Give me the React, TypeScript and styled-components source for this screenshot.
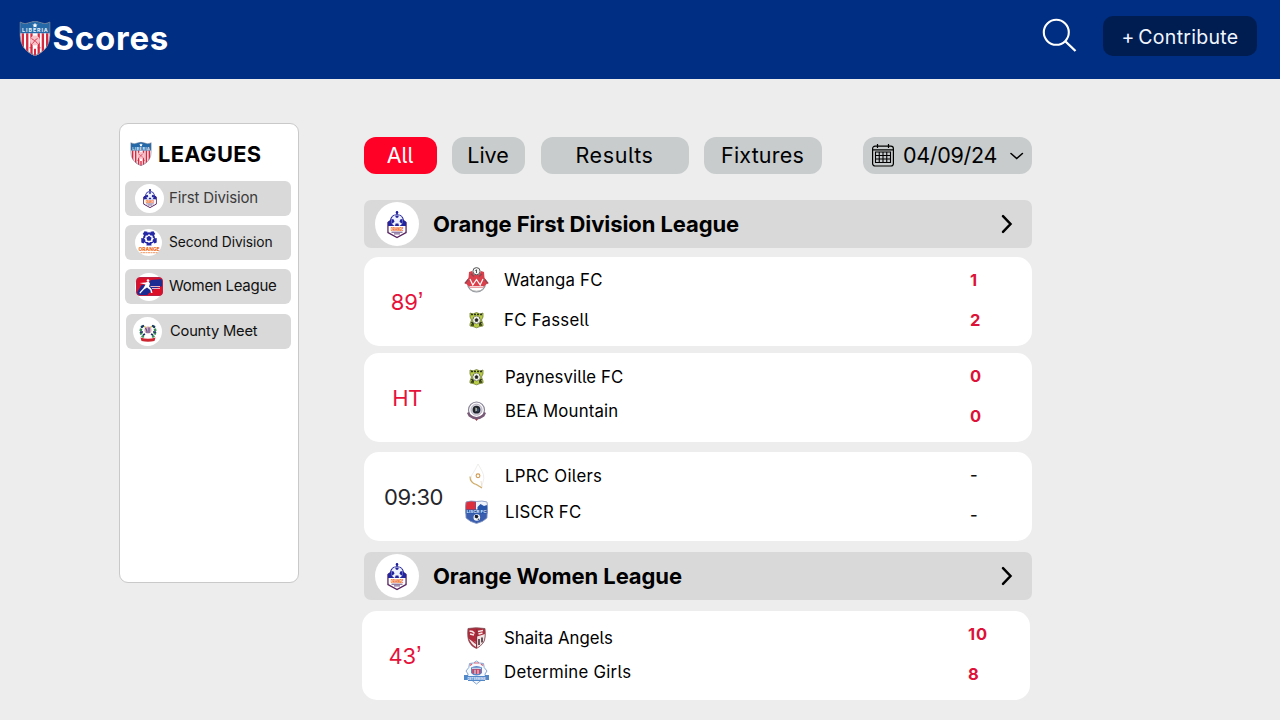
import React from "react";
import styled, { createGlobalStyle } from "styled-components";

const GlobalStyle = createGlobalStyle`
  * { box-sizing: border-box; }
  body {
    margin: 0;
    background: #ededed;
    font-family: Inter, "Liberation Sans", sans-serif;
    font-feature-settings: "cv05" 1;
    color: #000;
    overflow: hidden;
  }
  svg {
    flex: none;
    overflow: visible;
    letter-spacing: 0;
    font-feature-settings: normal;
  }
`;

const Page = styled.div`
  width: 1280px;
  height: 720px;
  overflow: hidden;
  background: #ededed;
`;

const Header = styled.header`
  height: 79px;
  background: #002e82;
  display: flex;
  align-items: flex-start;
  padding: 0 23px 0 19px;
`;

const Brand = styled.div`
  display: flex;
  align-items: center;
  gap: 1px;
  height: 77px;
  flex: 1;
`;

const BrandName = styled.h1`
  margin: 0;
  padding-left: 0.5px;
  font-size: 33px;
  font-weight: 650;
  line-height: 39px;
  padding-bottom: 1px;
  letter-spacing: 0.75px;
  color: #fff;
  font-feature-settings: normal;
`;

const SearchButton = styled.button`
  border: 0;
  padding: 0;
  background: none;
  width: 36px;
  height: 36px;
  margin: 17px 25px 0 0;
`;

const ContributeButton = styled.button`
  border: 0;
  width: 154px;
  height: 40px;
  margin-top: 16px;
  padding: 1px 0 0;
  border-radius: 10px;
  background: #001d52;
  color: #f2f6ff;
  font: 400 19.5px/40px Inter, sans-serif;
  letter-spacing: 0.3px;
  word-spacing: -2.2px;
  white-space: nowrap;
`;

const Body = styled.div`
  display: flex;
  align-items: flex-start;
  padding-left: 119px;
`;

const Sidebar = styled.aside`
  width: 180px;
  height: 460px;
  margin-top: 44px;
  border: 1px solid #c9c9c9;
  border-radius: 9px;
  background: #fff;
  padding: 16px 7px 0 5px;
`;

const SidebarTitle = styled.h2`
  display: flex;
  align-items: center;
  gap: 6px;
  margin: 0 0 13px;
  padding-left: 5px;
  height: 28px;
  font-size: 21.8px;
  font-weight: 680;
  letter-spacing: 0.4px;
`;

const LeagueItem = styled.a<{ $gap: number; $inset: number; $ink: string; $size: number; $track: number }>`
  display: flex;
  align-items: center;
  height: 35px;
  margin: 0 0 ${(p) => p.$gap}px ${(p) => p.$inset}px;
  padding-left: ${(p) => (p.$inset ? 7 : 10)}px;
  border-radius: 6px;
  background: #d9d9d9;
  color: ${(p) => p.$ink};
  font-size: ${(p) => p.$size}px;
  letter-spacing: ${(p) => p.$track}px;
  white-space: nowrap;
`;

const LeagueLabel = styled.span`
  padding-bottom: 2px;
`;

const Disc = styled.span<{ $size: number; $after: number }>`
  display: flex;
  flex: none;
  align-items: center;
  justify-content: center;
  width: ${(p) => p.$size}px;
  height: ${(p) => p.$size}px;
  margin-right: ${(p) => p.$after}px;
  border-radius: 50%;
  background: #fff;
`;

const Main = styled.main`
  width: 668px;
  margin: 58px 0 0 65px;
`;

const Tabs = styled.nav`
  display: flex;
  height: 37px;
  margin-bottom: 26px;
`;

const Tab = styled.button<{ $width: number; $after: number; $track: number; $active?: boolean }>`
  border: 0;
  padding: 0 1px 0 0;
  width: ${(p) => p.$width}px;
  margin-right: ${(p) => p.$after}px;
  border-radius: 12px;
  background: ${(p) => (p.$active ? "#ff0026" : "#c8cccd")};
  color: ${(p) => (p.$active ? "#fff" : "#000")};
  font: 400 21.5px/37px Inter, sans-serif;
  font-feature-settings: "cv05" 1;
  letter-spacing: ${(p) => p.$track}px;
`;

const DatePicker = styled.button`
  display: flex;
  align-items: center;
  border: 0;
  width: 169px;
  padding: 0 8px;
  border-radius: 12px;
  background: #c8cccd;
  color: #000;
  font: 400 21.5px/37px Inter, sans-serif;
  letter-spacing: -0.3px;
`;

const DateValue = styled.span`
  flex: none;
  width: 114px;
  padding-left: 8px;
  text-align: left;
`;

const LeagueHeader = styled.section<{ $after: number }>`
  display: flex;
  align-items: center;
  height: 48px;
  margin-bottom: ${(p) => p.$after}px;
  padding: 0 18.5px 0 11px;
  border-radius: 7px;
  background: #d9d9d9;
`;

const LeagueName = styled.h3<{ $track: number }>`
  flex: 1;
  margin: 0;
  font-size: 22px;
  font-weight: 680;
  letter-spacing: ${(p) => p.$track}px;
`;

const MatchCard = styled.article<{ $after: number; $shift?: boolean }>`
  display: flex;
  height: 89px;
  margin: 0 0 ${(p) => p.$after}px ${(p) => (p.$shift ? -2 : 0)}px;
  width: 668px;
  border-radius: 15px;
  background: #fff;
`;

const Clock = styled.div<{ $live: boolean; $track: number; $width: number }>`
  width: ${(p) => p.$width}px;
  padding-right: ${(p) => (p.$live ? p.$width - 86 : 1)}px;
  line-height: 90px;
  text-align: center;
  font-size: 22px;
  letter-spacing: ${(p) => p.$track}px;
  color: ${(p) => (p.$live ? "#e6123a" : "#26262a")};
`;

const MinuteMark = styled.span`
  font-family: "Liberation Sans", sans-serif;
  font-size: 25px;
  line-height: 1;
`;

const Teams = styled.div<{ $top: number; $gap: number; $width: number }>`
  display: flex;
  flex-direction: column;
  width: ${(p) => p.$width}px;
  gap: ${(p) => p.$gap}px;
  padding-top: ${(p) => p.$top}px;
`;

const Team = styled.div<{ $track: number; $inset: number }>`
  display: flex;
  align-items: center;
  height: 26px;
  font-size: 16.8px;
  letter-spacing: ${(p) => p.$track}px;
  white-space: nowrap;
  & > svg { margin-right: ${(p) => p.$inset}px; }
`;

const Goals = styled.div<{ $top: number; $live: boolean }>`
  display: flex;
  flex-direction: column;
  gap: 20px;
  padding-top: ${(p) => p.$top}px;
  font-size: 16.5px;
  line-height: 20px;
  font-weight: ${(p) => (p.$live ? 700 : 500)};
  letter-spacing: 0.8px;
  color: ${(p) => (p.$live ? "#dc1238" : "#111")};
`;

function Shield({ w, h }: { w: number; h: number }) {
  return (
    <svg width={w} height={h} viewBox="0 0 31 34">
      <clipPath id={"shield" + w}>
        <path d="M1 1Q6 4 10 1.500L15.500 0L21 1.500Q25 4 30 1V14Q30 28 15.500 34Q1 28 1 14Z" />
      </clipPath>
      <g clipPath={"url(#shield" + w + ")"}>
        <path fill="#fff" d="M0 0h31v34H0z" />
        <path fill="#d82840" d="M2.500 12h2.300v22H2.500zM6.800 12h2.300v22H6.800zM11 12h2.200v22H11zM18 12h2.200v22H18zM22 12h2.300v22H22zM26.200 12h2.300v22h-2.300zM14.500 27h2v7h-2z" />
        <path fill="#2569a8" d="M0 0h31v12H0z" />
        <circle cx="15.500" cy="19" r="4.800" fill="#f6c3cb" />
        <path d="M12 17l3 2 3-2M13 22l2.500-3 2.500 3M10 26h3m5 0h3" stroke="#d82840" fill="none" strokeWidth=".8" />
      </g>
      <text x="3" y="10.900" fontSize="5.200" fontWeight="700" textLength="25" fill="#e7f2fa">LIBERIA</text>
      <path fill="#fff" d="M15.500 1.800l.8 1.500 1.700.2-1.200 1.200.2 1.700-1.500-.8-1.500.8.2-1.700L13 3.500l1.700-.2z" />
      <path fill="none" stroke="#6d7890" strokeWidth=".7" d="M1 1Q6 4 10 1.500L15.500 .4L21 1.500Q25 4 30 1V14Q30 28 15.500 33.500Q1 28 1 14Z" />
    </svg>
  );
}

function OrangeCrest({ w, h }: { w: number; h: number }) {
  return (
    <svg width={w} height={h} viewBox="0 0 20 27">
      <path d="M10 0v5" stroke="#25259a" strokeWidth="1.500" />
      <circle cx="10" cy="1.500" r="1.300" fill="#20209a" />
      <path d="M3 10L1 11.500v10l9 5 9-5v-10L17 10" fill="#fff" stroke="#57225f" strokeWidth="1.400" />
      <path d="M10 3.300c4.500 0 6.500 3 7 6L19 11v4H1v-4l2-1.700c.5-3 2.500-6 7-6z" fill="#24249c" />
      <circle cx="10" cy="9.700" r="5.900" fill="#eef1ff" />
      <path d="M8 4.500h4L11 6.800H9zM4.500 8l2.300.5.700 2.200-2 1.800-1.200-1zM15.500 8l-2.300.5-.7 2.200 2 1.800 1.200-1zM8.600 12.500h2.800l.6 2.500H8z" fill="#24249c" />
      <path fill="#fff" d="M1.800 15h16.400v5.500H1.800z" />
      <text x="3.800" y="19.700" fontSize="4.600" fontWeight="900" textLength="12.400" lengthAdjust="spacingAndGlyphs" fill="#f16a24">ORANGE</text>
      <path d="M4.500 21.200h11M7 22.900h6" stroke="#53306e" strokeWidth=".9" />
    </svg>
  );
}

function SecondCrest() {
  return (
    <svg width="22" height="23" viewBox="0 0 22 23">
      <circle cx="11" cy="7.200" r="6" fill="#2428a4" />
      <path fill="#fff" d="M11 3l1.500 1.500h2l.2 2 1.500 1.200-1.500 1.300-.2 2-2.200-.1L11 12.300l-1.300-1.400-2.200.1-.2-2-1.500-1.300 1.500-1.200.2-2h2z" />
      <path fill="#2428a4" d="M11 4.800l2.600 2-1 3H9.400l-1-3zM6.500.3l3 .5v2.700L6.800 4.800 4.700 3zM15.500.3l-3 .5v2.700l2.700 1.300L17.300 3zM3.300 7l2.900.6 1 2.600-1.700 2.300-2.200-1zM18.700 7l-2.900.6-1 2.600 1.700 2.300 2.200-1zM9 11.800h4l.6 2.800H8.400z" />
      <text x=".5" y="20.200" fontSize="5.200" fontWeight="800" textLength="21" lengthAdjust="spacingAndGlyphs" fill="#f06c20">ORANGE</text>
      <path d="M2.500 21.700h17" stroke="#f08a50" strokeWidth=".9" strokeDasharray="2 .5" />
    </svg>
  );
}

function WomenCrest() {
  return (
    <svg width="27" height="19" viewBox="0 0 27 19">
      <rect x=".5" y=".5" width="26" height="18" rx="3.500" fill="#db1028" />
      <path fill="#1c2b91" d="M1 15.500L5.500 8l6-.5L15 3l11-1v11l-8 1-5 2-2 2.500H4a3 3 0 0 1-3-3z" />
      <path fill="#db1028" d="M18 12l8.500-3v6.500a3 3 0 0 1-3 3H12l3-4z" />
      <circle cx="12" cy="3.500" r="1.300" fill="#fff" />
      <path fill="#fff" d="M3.500 6l6-.5 3-1 1.500 2-1 3 2.500 2.500 1 4h-1.500l-.7-3-3.300-2.500-3 2L4 16.800l-.5-1.200L7.500 11l2-3.500z" />
      <path d="M14.500 9.500H24M16 11.500h8" stroke="#efb2c2" strokeWidth="1.100" />
      <rect x=".5" y=".5" width="26" height="18" rx="3.500" fill="none" stroke="#b92144" />
    </svg>
  );
}

function CountyCrest() {
  return (
    <svg width="20" height="20" viewBox="0 0 20 20">
      <path d="M5 3.500Q2 7 3 11t4 4M15 3.500Q18 7 17 11t-4 4" stroke="#3c8d58" strokeWidth="2.500" fill="none" strokeDasharray="2.500 1" />
      <path d="M3 5.500l3-2M2 10h3M5 13l2-1M17 5.500l-3-2M18 10h-3M15 13l-2-1" stroke="#1c2f6a" strokeWidth="1.700" />
      <path d="M6 4.500l2 1M14 4.500l-2 1" stroke="#c7b62d" strokeWidth="1.200" />
      <circle cx="10" cy="8" r="3.600" fill="#d7aab8" />
      <path d="M7.500 6l1.500 3M11 5.500v3.500M8 10h4" stroke="#514386" strokeWidth="1.100" />
      <path fill="#ce2631" d="M2.500 15.500Q10 18 17.500 15.500l-1 3.500Q10 20.500 3.500 19z" />
    </svg>
  );
}

function WatangaCrest() {
  return (
    <svg width="25" height="26" viewBox="0 0 25 26">
      <circle cx="12.500" cy="16" r="9" fill="#fff" stroke="#9298a0" strokeWidth="1.200" />
      <path fill="#d9404c" d="M5 5l3-1 2 4h5l2-4 3 1 .5 6L24 16l-2.500 2L19 20.500H6L3.500 18 1 16l3.500-5z" />
      <path d="M6 12l2.800 6 3.700-5.500 3.700 5.500 2.800-6" stroke="#fff" strokeWidth="1.200" fill="none" />
      <path d="M5.500 19.500h14" stroke="#f4d4d7" strokeWidth="1" />
      <path d="M.8 16.500l3.400-4M24.200 16.500l-3.400-4M7 7l3 2.500m8-2.500l-3 2.500" stroke="#8a4650" strokeWidth="1.300" />
      <circle cx="12.500" cy="4.200" r="3.600" fill="#f2f3f4" stroke="#555" />
      <path d="M12.500 2.500v3.500M11.300 3.500h1.500" stroke="#555" strokeWidth="1" />
      <path d="M6 22.500q6.500 3.500 13 0" stroke="#aaa" fill="none" />
    </svg>
  );
}

function FassellCrest() {
  return (
    <svg width="25" height="16" viewBox="0 0 25 16">
      <path fill="#b9cd47" stroke="#617023" strokeWidth=".7" d="M6 1l3 1 3.500-1.500L16 2l3-1v4l-1.500 3L19 12v2l-3 .5-3.500 1.300L9 14.500 6 14v-2l1.500-4L6 5z" />
      <path d="M7 2.500h2m1 0h2m1 0h2m1 0h2M7 13h3m5 0h3" stroke="#293319" strokeWidth="1.500" />
      <circle cx="12.500" cy="8" r="3.900" fill="#f7f9ee" stroke="#50583a" strokeWidth=".6" />
      <path d="M12.500 6.300l1.600 1.200-.6 1.900h-2l-.6-1.900zM9 6.500l1-.8M16 6.500l-1-.8M10.300 11.300l.6-.8m3.800.8l-.6-.8" fill="#222" stroke="#222" strokeWidth=".6" />
      <path d="M7.500 10l2 2.500m8-2.500l-2 2.500" stroke="#29311a" strokeWidth="1.600" />
    </svg>
  );
}

function BeaCrest() {
  return (
    <svg width="25" height="20" viewBox="0 0 25 20">
      <circle cx="12.500" cy="9" r="8" fill="#fff" stroke="#8c8598" strokeWidth="1.200" />
      <circle cx="12.500" cy="8.700" r="5.600" fill="#d9d6e1" stroke="#a9a2b4" strokeWidth=".8" />
      <circle cx="12.500" cy="8.700" r="3.900" fill="#20242c" />
      <path d="M11.500 6.500l1.200.5v3l-1.200.5z" fill="#e4e4bd" />
      <path d="M14 7.500v3" stroke="#4e70bd" />
      <path d="M4 11.500l1.500 3Q12.500 20 19.500 14.500l1.500-3" fill="none" stroke="#785a76" strokeWidth="2.300" />
      <path d="M11 18h3l-1.500 2z" fill="#9b3548" />
    </svg>
  );
}

function OilersCrest() {
  return (
    <svg width="25" height="26" viewBox="0 0 25 26">
      <path d="M14 1L11 7Q6 13 7 17q2 5 10 7Q22 15 18 8z" fill="#fff" stroke="#e8e7e5" strokeWidth=".7" />
      <path d="M6 13.500Q6 20 12.500 21.500L18 25" stroke="#d0ad68" strokeWidth="1.200" fill="none" />
      <circle cx="14" cy="12.800" r="1.900" fill="#fff" stroke="#d19852" strokeWidth="1.100" />
      <path d="M17 18l1 6" stroke="#e9dcc4" strokeWidth=".8" />
    </svg>
  );
}

function LiscrCrest() {
  return (
    <svg width="25" height="24" viewBox="0 0 25 24">
      <path fill="#3b5fae" d="M2 2l5-1 5.500.5L18 1l5 1 .5 5-.5 11q-4 4-10.500 5.500Q6 22 2 18L1.500 7z" />
      <path fill="#dd2e3d" d="M2 2l5-1 4.500.5V10h-10V7z" />
      <path fill="#eef3fb" d="M12 1.500L18 1l5 1 .5 8H12z" />
      <path fill="#2554a8" d="M13.500 7l3-3 3.500 2 3-1 .5 4.500h-10zM1.500 9.500h22v4h-22z" />
      <text x="2.500" y="13" fontSize="3.800" fontWeight="700" textLength="20" lengthAdjust="spacingAndGlyphs" fill="#dfe8f8">LISCR FC</text>
      <circle cx="12.800" cy="17.500" r="3.300" fill="#f4f6fa" />
      <path d="M11 15h2.500l1 1.800-1.500 1.700-2.300-1zM13.500 19l1.800-.5-1 1.800z" fill="#182030" />
      <path d="M2 2l5-1 5.500.5L18 1l5 1 .5 5-.5 11q-4 4-10.500 5.500Q6 22 2 18L1.500 7z" fill="none" stroke="#8c9bc3" strokeWidth=".8" />
    </svg>
  );
}

function ShaitaCrest() {
  return (
    <svg width="25" height="22" viewBox="0 0 25 22">
      <path d="M4 1.500Q12 0 21 1.500q1 10-1.500 14Q16 20 12.500 21.500 8 20 5.500 15.500 3 11 4 1.500z" fill="#ad2a3a" />
      <path d="M13 9.500L21 7q0 6-2 9-2 3.500-6 5zM5 12l7 3v5q-5-3-7-8z" fill="#f0e6e6" />
      <path d="M5.500 4l3 .5 2 2M6 7l4 1M14 4.500l5-1M14.500 7l4-1" stroke="#f3e6e7" strokeWidth="1.600" fill="none" />
      <path d="M6 11.500l6 5" stroke="#ad2a3a" strokeWidth="1.500" />
      <path d="M15 12v6M18 10.500v5" stroke="#3c2228" strokeWidth="1.500" />
      <path d="M12.700 2v18" stroke="#74303c" strokeWidth=".8" />
      <path d="M4 1.500Q12 0 21 1.500q1 10-1.500 14Q16 20 12.500 21.500 8 20 5.500 15.500 3 11 4 1.500z" fill="none" stroke="#7f5058" strokeWidth=".8" />
    </svg>
  );
}

function DetermineCrest() {
  return (
    <svg width="25" height="25" viewBox="0 0 25 25">
      <path d="M12.500 1l3 2 4 .5.700 4L23 11l-2 3 .5 4-4 2-5 4-5-4-4-2 .5-4-2-3 2.800-3.500.7-4 4-.5z" fill="#f6f9fe" stroke="#86a6d3" />
      <path d="M6 5.500l2-1.500M10 3h5M17 4l2 1.500" stroke="#d96372" strokeWidth="1.200" />
      <path d="M7 7.500Q12.500 4.500 18 7.500v5.500q-2 2.500-5.500 2.500T7 13z" fill="#5a87c7" />
      <path d="M9.500 9v4.500m3-5v5.500m3-5V13.500" stroke="#e13c55" strokeWidth="2" />
      <path d="M8 8.300h9M11 10v4M14 10v4" stroke="#fff" strokeWidth=".8" />
      <path fill="#5388c8" d="M0 15h4v1h17v-1h4v5h-4v1H4v-1H0z" />
      <text x="3.500" y="19.700" fontSize="3.400" fontWeight="700" textLength="18" lengthAdjust="spacingAndGlyphs" fill="#e9f3ff">DETERMINE</text>
    </svg>
  );
}

function CalendarIcon() {
  return (
    <svg width="24" height="23" viewBox="0 0 24 23" fill="none" stroke="#000">
      <rect x="1.600" y="2.200" width="20.800" height="19.800" rx="2.500" strokeWidth="1.200" />
      <path d="M6.500 0v4M17.500 0v4M1.600 5.800h20.800" strokeWidth="1.200" />
      <path d="M4.500 8h15v10.500h-15zM8.250 8v10.500M12 8v10.500M15.750 8v10.500M4.500 11.500h15M4.500 15h15" strokeWidth="1.100" />
    </svg>
  );
}

function ArrowIcon() {
  return (
    <svg width="14" height="20" viewBox="0 0 14 20" fill="none" stroke="#000" strokeWidth="2.500" strokeLinecap="round">
      <path d="M3 2.200L10.500 10 3 17.800" />
    </svg>
  );
}

const leagues = [
  { name: "First Division", ink: "#3c3c3c", size: 15, track: -0.15, gap: 9, inset: 0, disc: 29, after: 5, crest: <OrangeCrest w={14} h={19} /> },
  { name: "Second Division", ink: "#111", size: 13.8, track: -0.1, gap: 9, inset: 0, disc: 27, after: 7, crest: <SecondCrest /> },
  { name: "Women League", ink: "#111", size: 15, track: -0.25, gap: 10, inset: 0, disc: 28, after: 6, crest: <WomenCrest /> },
  { name: "County Meet", ink: "#111", size: 14.7, track: -0.2, gap: 0, inset: 1, disc: 29, after: 8, crest: <CountyCrest /> },
];

interface Side { name: string; crest: React.ReactNode; goals: string; track: number; inset: number }
interface Match { clock: string; minutes?: boolean; live: boolean; clockTrack: number; sides: Side[]; top: number; gap: number; goalsTop: number; after: number; shift?: boolean }

const firstDivision: Match[] = [
  { clock: "89", minutes: true, live: true, clockTrack: -0.1, top: 10, gap: 14, goalsTop: 13, after: 7, sides: [
    { name: "Watanga FC", crest: <WatangaCrest />, goals: "1", track: 0.2, inset: 15 },
    { name: "FC Fassell", crest: <FassellCrest />, goals: "2", track: 0.27, inset: 15 } ] },
  { clock: "HT", live: true, clockTrack: -0.6, top: 11, gap: 8, goalsTop: 13, after: 10, sides: [
    { name: "Paynesville FC", crest: <FassellCrest />, goals: "0", track: 0.1, inset: 16 },
    { name: "BEA Mountain", crest: <BeaCrest />, goals: "0", track: 0.17, inset: 16 } ] },
  { clock: "09:30", live: false, clockTrack: -0.5, top: 11, gap: 10, goalsTop: 13, after: 11, sides: [
    { name: "LPRC Oilers", crest: <OilersCrest />, goals: "-", track: 0.27, inset: 16 },
    { name: "LISCR FC", crest: <LiscrCrest />, goals: "-", track: 0.22, inset: 16 } ] },
];

const womenLeague: Match[] = [
  { clock: "43", minutes: true, live: true, clockTrack: -0.1, top: 14, gap: 8, goalsTop: 13, after: 0, shift: true, sides: [
    { name: "Shaita Angels", crest: <ShaitaCrest />, goals: "10", track: 0, inset: 15 },
    { name: "Determine Girls", crest: <DetermineCrest />, goals: "8", track: 0.27, inset: 15 } ] },
];

function MatchRow({ match }: { match: Match }) {
  const crestEdge = match.shift ? 102 : 100;
  return (
    <MatchCard $after={match.after} $shift={match.shift}>
      <Clock $live={match.live} $track={match.clockTrack} $width={crestEdge}>
        {match.clock}
        {match.minutes && <MinuteMark>’</MinuteMark>}
      </Clock>
      <Teams $top={match.top} $gap={match.gap} $width={606 - crestEdge}>
        {match.sides.map((s) => (
          <Team key={s.name} $track={s.track} $inset={s.inset}>{s.crest}{s.name}</Team>
        ))}
      </Teams>
      <Goals $top={match.goalsTop} $live={match.live}>
        {match.sides.map((s) => <span key={s.name}>{s.goals}</span>)}
      </Goals>
    </MatchCard>
  );
}

export default function App() {
  return (
    <Page>
      <GlobalStyle />
      <Header>
        <Brand>
          <Shield w={32} h={35} />
          <BrandName>Scores</BrandName>
        </Brand>
        <SearchButton aria-label="Search">
          <svg width="36" height="36" viewBox="0 0 36 36" fill="none" stroke="#fff" strokeWidth="2.100">
            <circle cx="14.300" cy="15.300" r="12.500" />
            <path d="M23 24l10.500 10" strokeWidth="2.400" />
          </svg>
        </SearchButton>
        <ContributeButton>+ Contribute</ContributeButton>
      </Header>
      <Body>
        <Sidebar>
          <SidebarTitle><Shield w={22} h={24} />LEAGUES</SidebarTitle>
          {leagues.map((l) => (
            <LeagueItem key={l.name} $gap={l.gap} $inset={l.inset} $ink={l.ink} $size={l.size} $track={l.track}>
              <Disc $size={l.disc} $after={l.after}>{l.crest}</Disc>
              <LeagueLabel>{l.name}</LeagueLabel>
            </LeagueItem>
          ))}
        </Sidebar>
        <Main>
          <Tabs>
            <Tab $active $width={73} $after={15} $track={0}>All</Tab>
            <Tab $width={73} $after={16} $track={0}>Live</Tab>
            <Tab $width={148} $after={15} $track={0.65}>Results</Tab>
            <Tab $width={118} $after={41} $track={0.2}>Fixtures</Tab>
            <DatePicker>
              <CalendarIcon />
              <DateValue>04/09/24</DateValue>
              <svg width="14" height="10" viewBox="0 0 14 10" fill="none" stroke="#000" strokeWidth="1.600" strokeLinecap="round">
                <path d="M2 2.500L7.700 7.500 13.400 2.500" />
              </svg>
            </DatePicker>
          </Tabs>
          <LeagueHeader $after={9}>
            <Disc $size={44} $after={14}><OrangeCrest w={20} h={27} /></Disc>
            <LeagueName $track={-0.09}>Orange First Division League</LeagueName>
            <ArrowIcon />
          </LeagueHeader>
          {firstDivision.map((m) => <MatchRow key={m.clock} match={m} />)}
          <LeagueHeader $after={11}>
            <Disc $size={44} $after={14}><OrangeCrest w={20} h={27} /></Disc>
            <LeagueName $track={-0.1}>Orange Women League</LeagueName>
            <ArrowIcon />
          </LeagueHeader>
          {womenLeague.map((m) => <MatchRow key={m.clock} match={m} />)}
        </Main>
      </Body>
    </Page>
  );
}
